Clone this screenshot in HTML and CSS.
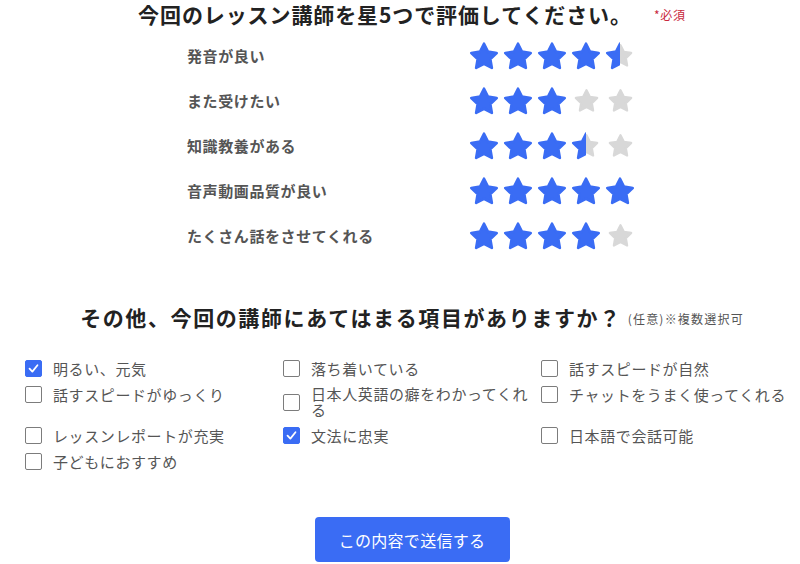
FILE: index.html
```html
<!DOCTYPE html>
<html lang="ja">
<head>
<meta charset="utf-8">
<title>レッスン評価</title>
<link rel="stylesheet" href="styles.css">
</head>
<body>
<svg class="defs" width="0" height="0" aria-hidden="true">
  <symbol id="star" viewBox="0 0 24 24">
    <polygon points="12,2.8 14.94,8.75 21.51,9.71 16.76,14.35 17.88,20.89 12,17.8 6.12,20.89 7.24,14.35 2.49,9.71 9.06,8.75" stroke-linejoin="round" stroke-width="2"/>
  </symbol>
  <symbol id="check" viewBox="0 0 17 17">
    <path d="M4 8.6 L7.2 12 L13 4.8" fill="none" stroke="#fff" stroke-width="2" stroke-linecap="round" stroke-linejoin="round"/>
  </symbol>
</svg>
<div class="page">
  <h1 class="title">今回のレッスン講師を星5つで評価してください。<span class="req">*必須</span></h1>

  <div class="ratings">
    <div class="rating-row">
      <div class="rating-label">発音が良い</div>
      <div class="stars">
        <span class="slot"><svg class="s-grey"><use href="#star"/></svg><span class="fill"><svg class="s-blue"><use href="#star"/></svg></span></span>
        <span class="slot"><svg class="s-grey"><use href="#star"/></svg><span class="fill"><svg class="s-blue"><use href="#star"/></svg></span></span>
        <span class="slot"><svg class="s-grey"><use href="#star"/></svg><span class="fill"><svg class="s-blue"><use href="#star"/></svg></span></span>
        <span class="slot"><svg class="s-grey"><use href="#star"/></svg><span class="fill"><svg class="s-blue"><use href="#star"/></svg></span></span>
        <span class="slot"><svg class="s-grey"><use href="#star"/></svg><span class="fill" style="width:50%"><svg class="s-blue"><use href="#star"/></svg></span></span>
      </div>
    </div>
    <div class="rating-row">
      <div class="rating-label">また受けたい</div>
      <div class="stars">
        <span class="slot"><svg class="s-grey"><use href="#star"/></svg><span class="fill"><svg class="s-blue"><use href="#star"/></svg></span></span>
        <span class="slot"><svg class="s-grey"><use href="#star"/></svg><span class="fill"><svg class="s-blue"><use href="#star"/></svg></span></span>
        <span class="slot"><svg class="s-grey"><use href="#star"/></svg><span class="fill"><svg class="s-blue"><use href="#star"/></svg></span></span>
        <span class="slot"><svg class="s-grey"><use href="#star"/></svg></span>
        <span class="slot"><svg class="s-grey"><use href="#star"/></svg></span>
      </div>
    </div>
    <div class="rating-row">
      <div class="rating-label">知識教養がある</div>
      <div class="stars">
        <span class="slot"><svg class="s-grey"><use href="#star"/></svg><span class="fill"><svg class="s-blue"><use href="#star"/></svg></span></span>
        <span class="slot"><svg class="s-grey"><use href="#star"/></svg><span class="fill"><svg class="s-blue"><use href="#star"/></svg></span></span>
        <span class="slot"><svg class="s-grey"><use href="#star"/></svg><span class="fill"><svg class="s-blue"><use href="#star"/></svg></span></span>
        <span class="slot"><svg class="s-grey"><use href="#star"/></svg><span class="fill" style="width:50%"><svg class="s-blue"><use href="#star"/></svg></span></span>
        <span class="slot"><svg class="s-grey"><use href="#star"/></svg></span>
      </div>
    </div>
    <div class="rating-row">
      <div class="rating-label">音声動画品質が良い</div>
      <div class="stars">
        <span class="slot"><svg class="s-grey"><use href="#star"/></svg><span class="fill"><svg class="s-blue"><use href="#star"/></svg></span></span>
        <span class="slot"><svg class="s-grey"><use href="#star"/></svg><span class="fill"><svg class="s-blue"><use href="#star"/></svg></span></span>
        <span class="slot"><svg class="s-grey"><use href="#star"/></svg><span class="fill"><svg class="s-blue"><use href="#star"/></svg></span></span>
        <span class="slot"><svg class="s-grey"><use href="#star"/></svg><span class="fill"><svg class="s-blue"><use href="#star"/></svg></span></span>
        <span class="slot"><svg class="s-grey"><use href="#star"/></svg><span class="fill"><svg class="s-blue"><use href="#star"/></svg></span></span>
      </div>
    </div>
    <div class="rating-row">
      <div class="rating-label">たくさん話をさせてくれる</div>
      <div class="stars">
        <span class="slot"><svg class="s-grey"><use href="#star"/></svg><span class="fill"><svg class="s-blue"><use href="#star"/></svg></span></span>
        <span class="slot"><svg class="s-grey"><use href="#star"/></svg><span class="fill"><svg class="s-blue"><use href="#star"/></svg></span></span>
        <span class="slot"><svg class="s-grey"><use href="#star"/></svg><span class="fill"><svg class="s-blue"><use href="#star"/></svg></span></span>
        <span class="slot"><svg class="s-grey"><use href="#star"/></svg><span class="fill"><svg class="s-blue"><use href="#star"/></svg></span></span>
        <span class="slot"><svg class="s-grey"><use href="#star"/></svg></span>
      </div>
    </div>
  </div>

  <h2 class="heading2">その他、今回の講師にあてはまる項目がありますか？<span class="note">(任意)※複数選択可</span></h2>

  <div class="options">
    <div class="opt"><span class="box checked"><svg class="tick"><use href="#check"/></svg></span><span class="opt-text">明るい、元気</span></div>
    <div class="opt"><span class="box"></span><span class="opt-text">落ち着いている</span></div>
    <div class="opt"><span class="box"></span><span class="opt-text">話すスピードが自然</span></div>
    <div class="opt"><span class="box"></span><span class="opt-text">話すスピードがゆっくり</span></div>
    <div class="opt"><span class="box"></span><span class="opt-text">日本人英語の癖をわかってくれる</span></div>
    <div class="opt"><span class="box"></span><span class="opt-text">チャットをうまく使ってくれる</span></div>
    <div class="opt"><span class="box"></span><span class="opt-text">レッスンレポートが充実</span></div>
    <div class="opt"><span class="box checked"><svg class="tick"><use href="#check"/></svg></span><span class="opt-text">文法に忠実</span></div>
    <div class="opt"><span class="box"></span><span class="opt-text">日本語で会話可能</span></div>
    <div class="opt"><span class="box"></span><span class="opt-text">子どもにおすすめ</span></div>
  </div>

  <div class="actions">
    <button class="submit" type="button">この内容で送信する</button>
  </div>
</div>
</body>
</html>
```

FILE: styles.css
```css
* { box-sizing: border-box; }

body {
  margin: 0;
  background: #fff;
  font-family: "Noto Sans CJK JP", "Noto Sans", sans-serif;
  color: #222;
}

.defs { position: absolute; width: 0; height: 0; overflow: hidden; }

.page {
  padding-left: 24px;
}

.title {
  margin: 0;
  padding-top: 2px;
  font-size: 21px;
  line-height: 24px;
  font-weight: 700;
  letter-spacing: 0.9px;
  text-align: center;
  color: #222;
}

.req {
  font-size: 12px;
  line-height: 1;
  font-weight: 400;
  color: #c8283c;
  letter-spacing: 0.8px;
  margin-left: 22px;
  vertical-align: 3px;
}

.ratings {
  width: 450px;
  margin: 7px auto 0;
  display: flex;
  flex-direction: column;
}

.rating-row {
  height: 45px;
  display: flex;
  align-items: center;
}

.rating-label {
  width: 280px;
  font-size: 15px;
  font-weight: 700;
  color: #555;
  letter-spacing: 0.6px;
}

.stars {
  display: flex;
}

.slot {
  position: relative;
  width: 34px;
  height: 32px;
  display: flex;
  align-items: center;
  justify-content: center;
}

.s-grey {
  width: 27px;
  height: 27px;
  fill: #d8d8d8;
  stroke: #d8d8d8;
}

.fill {
  position: absolute;
  left: 0;
  top: 0;
  width: 100%;
  height: 32px;
  overflow: hidden;
}

.s-blue {
  display: block;
  width: 32px;
  height: 32px;
  margin-left: 1px;
  fill: #3a6cf4;
  stroke: #3a6cf4;
}

.heading2 {
  margin: 44px 0 0;
  font-size: 21px;
  line-height: 30px;
  font-weight: 700;
  letter-spacing: 1.6px;
  text-align: center;
  color: #222;
}

.note {
  font-size: 12px;
  line-height: 1;
  font-weight: 400;
  letter-spacing: 1.2px;
  color: #555;
  margin-left: 6px;
  vertical-align: 2px;
}

.options {
  margin: 28px 0 0 1px;
  display: grid;
  grid-template-columns: repeat(3, 258px);
  row-gap: 9px;
  align-items: start;
}

.opt {
  display: flex;
  align-items: center;
  gap: 11px;
}

.box {
  flex: none;
  width: 17px;
  height: 17px;
  border: 1px solid #7c7c7c;
  border-radius: 2px;
  background: #fff;
  display: flex;
}

.box.checked {
  border-color: #3a6cf4;
  background: #3a6cf4;
}

.tick {
  width: 15px;
  height: 15px;
}

.opt-text {
  width: 222px;
  font-size: 15px;
  line-height: 16px;
  letter-spacing: 0.6px;
  color: #555;
}

.actions {
  margin-top: 47px;
  display: flex;
  justify-content: center;
}

.submit {
  width: 195px;
  height: 45px;
  border: none;
  border-radius: 4px;
  background: #3a6cf4;
  color: #fff;
  font-family: "Noto Sans CJK JP", "Noto Sans", sans-serif;
  font-size: 16px;
  letter-spacing: 0.3px;
}
```
